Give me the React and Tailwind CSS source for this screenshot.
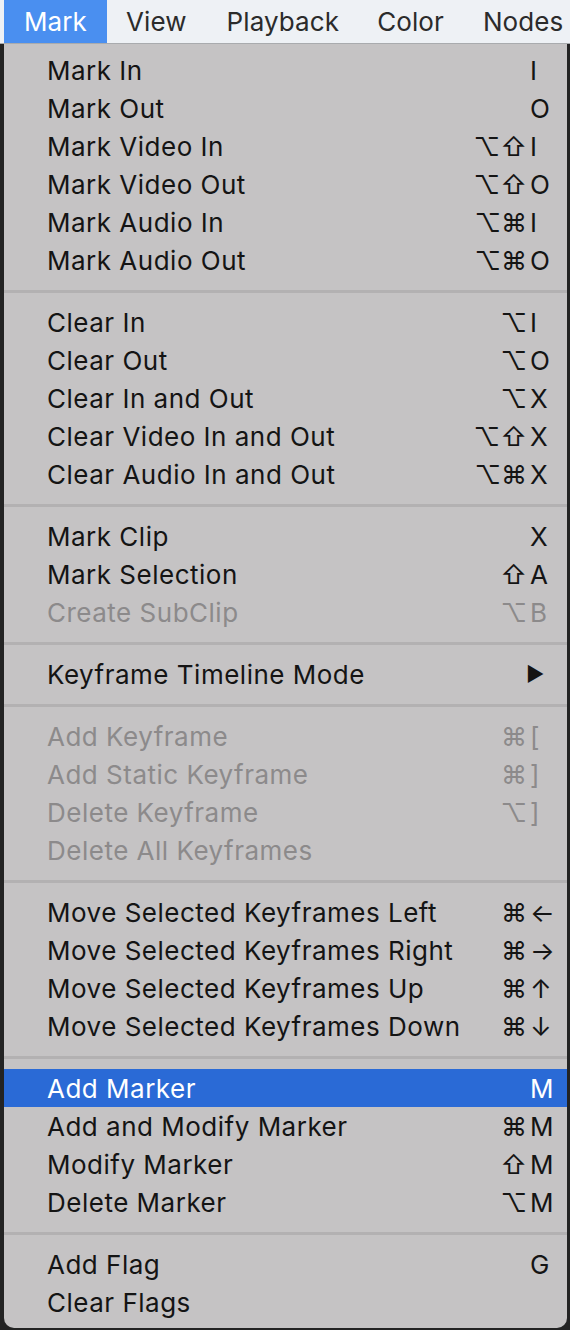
import React from 'react';

const groups = [
  [
    { label: 'Mark In', mods: '', key: 'I' },
    { label: 'Mark Out', mods: '', key: 'O' },
    { label: 'Mark Video In', mods: '⌥⇧', key: 'I' },
    { label: 'Mark Video Out', mods: '⌥⇧', key: 'O' },
    { label: 'Mark Audio In', mods: '⌥⌘', key: 'I' },
    { label: 'Mark Audio Out', mods: '⌥⌘', key: 'O' },
  ],
  [
    { label: 'Clear In', mods: '⌥', key: 'I' },
    { label: 'Clear Out', mods: '⌥', key: 'O' },
    { label: 'Clear In and Out', mods: '⌥', key: 'X' },
    { label: 'Clear Video In and Out', mods: '⌥⇧', key: 'X' },
    { label: 'Clear Audio In and Out', mods: '⌥⌘', key: 'X' },
  ],
  [
    { label: 'Mark Clip', mods: '', key: 'X' },
    { label: 'Mark Selection', mods: '⇧', key: 'A' },
    { label: 'Create SubClip', mods: '⌥', key: 'B', disabled: true },
  ],
  [{ label: 'Keyframe Timeline Mode', submenu: true }],
  [
    { label: 'Add Keyframe', mods: '⌘', key: '[', disabled: true },
    { label: 'Add Static Keyframe', mods: '⌘', key: ']', disabled: true },
    { label: 'Delete Keyframe', mods: '⌥', key: ']', disabled: true },
    { label: 'Delete All Keyframes', disabled: true },
  ],
  [
    { label: 'Move Selected Keyframes Left', mods: '⌘', key: '←' },
    { label: 'Move Selected Keyframes Right', mods: '⌘', key: '→' },
    { label: 'Move Selected Keyframes Up', mods: '⌘', key: '↑' },
    { label: 'Move Selected Keyframes Down', mods: '⌘', key: '↓' },
  ],
  [
    { label: 'Add Marker', mods: '', key: 'M', active: true },
    { label: 'Add and Modify Marker', mods: '⌘', key: 'M' },
    { label: 'Modify Marker', mods: '⇧', key: 'M' },
    { label: 'Delete Marker', mods: '⌥', key: 'M' },
  ],
  [
    { label: 'Add Flag', mods: '', key: 'G' },
    { label: 'Clear Flags' },
  ],
];

const font = { fontFamily: 'Inter, "DejaVu Sans", sans-serif' };

function MenuRow({ item }) {
  const tone = item.active
    ? 'bg-[#2a6ad6] text-white'
    : item.disabled
      ? 'text-[#8c8a8b]'
      : 'text-[#141414]';
  return (
    <div className={`flex h-[38px] items-center pl-[43px] text-[26px] ${tone}`}>
      <span className="flex-1 whitespace-nowrap tracking-[0.5px]">{item.label}</span>
      {item.submenu ? (
        <span className="w-[41px] text-[20px]">▶</span>
      ) : (
        <>
          <span className="whitespace-nowrap pr-[3px] text-right">{item.mods}</span>
          <span className="w-[37px]">{item.key}</span>
        </>
      )}
    </div>
  );
}

export default function App() {
  return (
    <div className="h-[1330px] w-[570px] overflow-hidden bg-[#232323]" style={font}>
      <div className="flex h-[44px] items-center border-b border-[#a9abae] bg-[#eef1f5] text-[26px] tracking-[0.1px] text-[#2b2b2b]">
        <span className="ml-[4px] flex h-full items-center bg-[#4a8ff0] px-[20px] text-white">Mark</span>
        <span className="ml-[19px]">View</span>
        <span className="ml-[40px]">Playback</span>
        <span className="ml-[38px]">Color</span>
        <span className="ml-[39px] whitespace-nowrap">Nodes</span>
      </div>
      <div className="ml-[4px] w-[563px] rounded-b-[10px] bg-[#c5c3c4] py-[7px]">
        {groups.map((group, gi) => (
          <div key={gi}>
            {gi > 0 && (
              <div className="flex h-[24px] items-center">
                <div className="h-[3px] w-full bg-[#b3b1b2]" />
              </div>
            )}
            {group.map((item) => (
              <MenuRow key={item.label} item={item} />
            ))}
          </div>
        ))}
      </div>
    </div>
  );
}
